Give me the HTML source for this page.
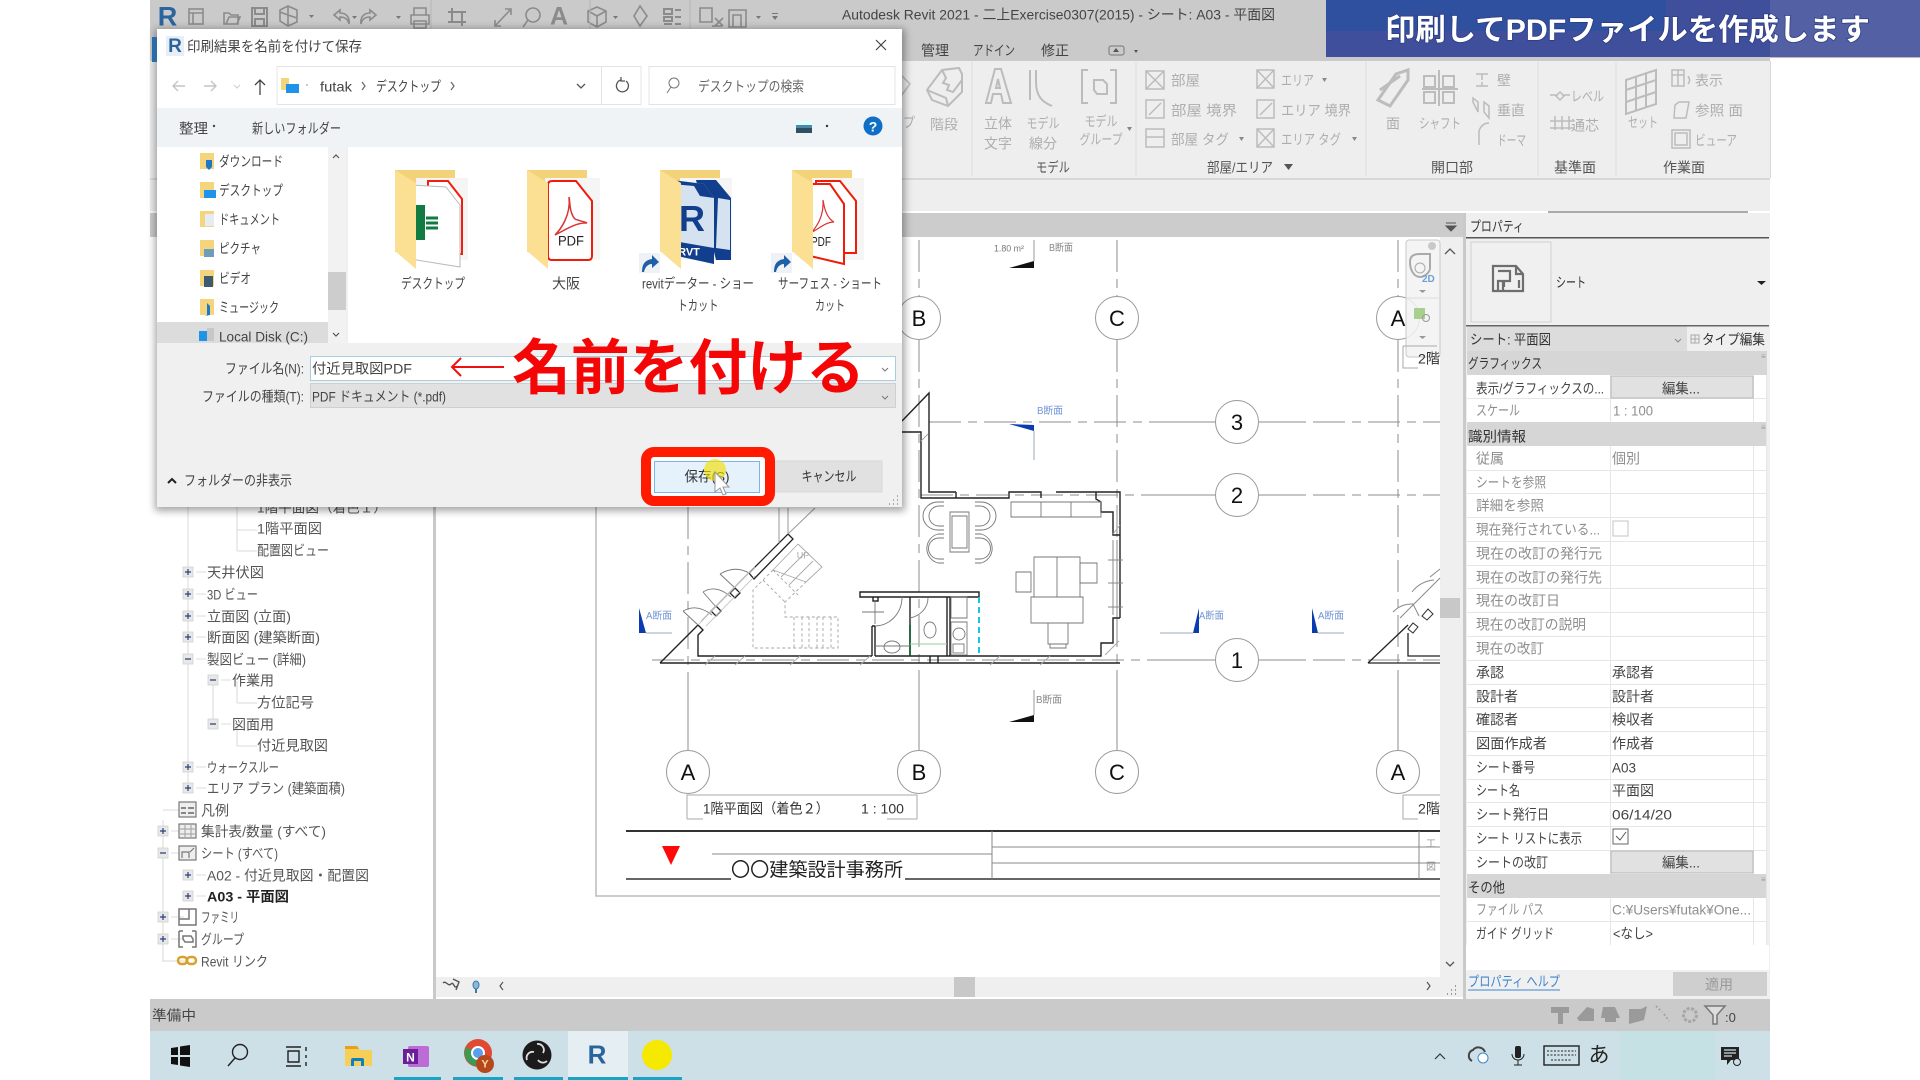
<!DOCTYPE html>
<html lang="ja"><head><meta charset="utf-8"><title>Revit</title>
<style>
html,body{margin:0;padding:0;background:#fff;width:1920px;height:1080px;overflow:hidden}
svg{display:block;filter:blur(.35px)}
text{font-family:"Liberation Sans","Noto Sans CJK JP",sans-serif;dominant-baseline:central;font-size:14px;transform:translateY(.7px)}
.m{text-anchor:middle}
</style></head><body>
<svg width="1920" height="1080" viewBox="0 0 1920 1080" xmlns="http://www.w3.org/2000/svg">
<defs><filter id="sh" x="-5%" y="-5%" width="110%" height="110%"><feGaussianBlur stdDeviation="4"/></filter></defs>
<rect width="1920" height="1080" fill="#fff"/>
<!-- app chrome -->
<rect x="150" y="0" width="1620" height="61" fill="#cacaca"/>
<rect x="150" y="61" width="1620" height="117" fill="#eeeeee"/>
<rect x="150" y="178" width="1620" height="2" fill="#d8d8d8"/>
<rect x="150" y="180" width="1620" height="31" fill="#eeeeee"/>
<rect x="150" y="211" width="1620" height="2" fill="#fff"/>
<rect x="1548" y="211" width="200" height="2" fill="#aaa"/>
<rect x="150" y="213" width="1313" height="24" fill="#cccccc"/>
<rect x="1463" y="213" width="307" height="787" fill="#efefef"/>
<rect x="150" y="237" width="283" height="762" fill="#fff"/>
<rect x="433" y="237" width="3" height="762" fill="#c9c9c9"/>
<rect x="436" y="237" width="1004" height="740" fill="#fff"/>
<rect x="1440" y="237" width="23" height="760" fill="#efefef"/>
<rect x="436" y="977" width="1027" height="20" fill="#efefef"/>
<rect x="954" y="977" width="21" height="20" fill="#c8c8c8"/>
<rect x="1440" y="598" width="20" height="20" fill="#c8c8c8"/>
<path d="M1445 254l5-5 5 5M1446 962l4 4 4-4" fill="none" stroke="#555" stroke-width="1.300"/>
<path d="M503 982l-3 4 3 4M1427 982l3 4-3 4" fill="none" stroke="#555" stroke-width="1.200"/>
<path d="M443 983c3-3 5 4 8 1s3 6 6 2M453 979l6 3-3 8" fill="none" stroke="#555" stroke-width="1.400"/>
<ellipse cx="476" cy="985" rx="3" ry="4" fill="#8ab8d8" stroke="#3a78a8"/><rect x="475" y="989" width="2" height="4" fill="#3a78a8"/>
<path d="M1447 994h1M1451 994h1M1455 994h1M1451 990h1M1455 990h1M1455 986h1" stroke="#999" stroke-width="2"/>

<!-- title bar -->
<text x="167.500" y="16" class="m" style="font-size:27px;font-weight:bold" fill="#2b659f">R</text>
<g fill="none" stroke="#8b8b8b" stroke-width="1.600">
<rect x="189" y="9" width="14" height="15"/><path d="M189 13h14M193 13v11"/>
<path d="M224 24v-11h5l2 2h7v9zM226 24l3-7h11l-3 7"/>
<path d="M252 8h15v18h-15zM255 8v6h9v-6M255 26v-7h9v7" stroke-width="2"/>
<path d="M288 6l9 4v12l-9 4-8-5v-11zM288 6v9l9 3M280 12l8 3v11"/>
<path d="M340 10l-6 5 6 5v-3c5 0 8 2 9 7 1-7-3-11-9-11z"/>
<path d="M370 10l6 5-6 5v-3c-5 0-8 2-9 7-1-7 3-11 9-11z"/>
<path d="M414 8h12v7h-12zM411 15h18v9h-18zM414 21h12v7h-12z"/>
<path d="M448 12h18M448 22h18M452 8v14M462 12v14" stroke-width="2"/>
<path d="M495 26l16-17M495 20v6h6M505 9h6v6"/>
<circle cx="533" cy="15" r="7"/><path d="M528 20l-5 7"/>
<path d="M597 7l9 4v11l-9 5-9-5v-11zM597 16l9-5M597 16l-9-5M597 16v11"/>
<path d="M640 6l7 10-7 10-6-10z"/>
<path d="M664 9h8v5h-8zM664 17h8v4h-8zM664 24h8M675 10h6M675 17h6M675 24h6" stroke-width="2"/>
<path d="M700 8h12v14h-12zM712 26h10M715 18l8 8M723 18l-8 8"/>
<path d="M729 10h17v17h-17zM733 15h8v12h-8z"/>
</g>
<text x="559" y="16" class="m" style="font-size:25px;font-weight:bold" fill="#8b8b8b">A</text>
<g fill="#777"><path d="M309 15h5l-2.500 3zM352 16h5l-2.500 3zM396 16h5l-2.500 3zM613 16h5l-2.500 3zM756 16h5l-2.500 3zM772 13h6v1h-6zM772 16h6l-3 4z"/></g>
<path d="M431 0v30M590 0v30M690 0v30" stroke="#b5b5b5"/>
<text x="842" y="14" textLength="433" lengthAdjust="spacingAndGlyphs" fill="#444">Autodesk Revit 2021 - 二上Exercise0307(2015) - シート: A03 - 平面図</text>
<g fill="#444">
<text x="921" y="50" textLength="28" lengthAdjust="spacingAndGlyphs">管理</text>
<text x="973" y="50" textLength="42" lengthAdjust="spacingAndGlyphs">アドイン</text>
<text x="1041" y="50" textLength="28" lengthAdjust="spacingAndGlyphs">修正</text>
</g>
<rect x="1109" y="46" width="15" height="9" rx="2" fill="none" stroke="#777"/><path d="M1116 48l3 4h-6zM1134 50h4l-2 3z" fill="#555"/>

<!-- banner -->
<rect x="1326" y="0" width="444" height="57" fill="#3f4f9c"/>
<rect x="1326" y="0" width="340" height="31" fill="#2f4f9f"/>
<rect x="1770" y="0" width="150" height="57" fill="#5360a4"/>
<rect x="1770" y="57" width="150" height="1" fill="#bbb"/>
<text x="1385" y="30" textLength="485" lengthAdjust="spacingAndGlyphs" style="font-size:30px;font-weight:700;paint-order:stroke;stroke:#2a3a80;stroke-width:1.500px" fill="#fff">印刷してPDFファイルを作成します</text>

<!-- ribbon -->
<path d="M972 62v114M1136 62v114M1366 62v114M1538 62v114M1616 62v114" stroke="#dcdcdc"/>
<rect x="1770" y="61" width="1" height="117" fill="#d8d8d8"/>
<g fill="#555" style="font-size:14px">
<text x="1053" y="167" class="m" textLength="34" lengthAdjust="spacingAndGlyphs">モデル</text>
<text x="1240" y="167" class="m" textLength="66" lengthAdjust="spacingAndGlyphs">部屋/エリア</text>
<path d="M1284 164h9l-4.500 6z"/>
<text x="1452" y="167" class="m" textLength="42" lengthAdjust="spacingAndGlyphs">開口部</text>
<text x="1575" y="167" class="m" textLength="42" lengthAdjust="spacingAndGlyphs">基準面</text>
<text x="1684" y="167" class="m" textLength="42" lengthAdjust="spacingAndGlyphs">作業面</text>
</g>
<g fill="#aeaeae" style="font-size:13.500px">
<text x="903" y="122" textLength="12" lengthAdjust="spacingAndGlyphs">プ</text>
<text x="944" y="124" class="m" textLength="28" lengthAdjust="spacingAndGlyphs">階段</text>
<text x="998" y="123" class="m" textLength="28" lengthAdjust="spacingAndGlyphs">立体</text>
<text x="998" y="143" class="m" textLength="28" lengthAdjust="spacingAndGlyphs">文字</text>
<text x="1043" y="123" class="m" textLength="33" lengthAdjust="spacingAndGlyphs">モデル</text>
<text x="1043" y="143" class="m" textLength="28" lengthAdjust="spacingAndGlyphs">線分</text>
<text x="1101" y="121" class="m" textLength="33" lengthAdjust="spacingAndGlyphs">モデル</text>
<text x="1101" y="139" class="m" textLength="43" lengthAdjust="spacingAndGlyphs">グループ</text>
<text x="1171" y="80" textLength="29" lengthAdjust="spacingAndGlyphs">部屋</text>
<text x="1171" y="110" textLength="66" lengthAdjust="spacingAndGlyphs">部屋 境界</text>
<text x="1171" y="139" textLength="58" lengthAdjust="spacingAndGlyphs">部屋 タグ</text>
<text x="1281" y="80" textLength="33" lengthAdjust="spacingAndGlyphs">エリア</text>
<text x="1281" y="110" textLength="70" lengthAdjust="spacingAndGlyphs">エリア 境界</text>
<text x="1281" y="139" textLength="60" lengthAdjust="spacingAndGlyphs">エリア タグ</text>
<text x="1393" y="123" class="m">面</text>
<text x="1440" y="123" class="m" textLength="42" lengthAdjust="spacingAndGlyphs">シャフト</text>
<text x="1497" y="80" >壁</text>
<text x="1497" y="110" textLength="28" lengthAdjust="spacingAndGlyphs">垂直</text>
<text x="1497" y="140" textLength="29" lengthAdjust="spacingAndGlyphs">ドーマ</text>
<text x="1571" y="96" textLength="33" lengthAdjust="spacingAndGlyphs">レベル</text>
<text x="1571" y="125" textLength="28" lengthAdjust="spacingAndGlyphs">通芯</text>
<text x="1643" y="122" class="m" textLength="30" lengthAdjust="spacingAndGlyphs">セット</text>
<text x="1695" y="80" textLength="28" lengthAdjust="spacingAndGlyphs">表示</text>
<text x="1695" y="110" textLength="48" lengthAdjust="spacingAndGlyphs">参照 面</text>
<text x="1695" y="140" textLength="42" lengthAdjust="spacingAndGlyphs">ビューア</text>
</g>
<g fill="none" stroke="#bcbcbc" stroke-width="1.500">
<path d="M927 90l15-20 17-2 3 6v18l-14 14-16-6zM927 90l19 8 2 8M942 70l4 8-3 5 6 2-2 5 6 2 9-12" stroke-width="2"/>
<path d="M901 75l9 9-9 12"/>
<path d="M986 103l9-34h6l10 34h-8l-2-9h-8l-2 9zM996 88h4l-2-9z" stroke-width="2"/>
<path d="M1030 70v30M1036 70v12c0 14 6 20 16 24" stroke-width="2"/>
<path d="M1088 70h-6v33h6M1110 70h6v33h-6M1094 80h9l4 4v10h-10l-3-4z" stroke-width="2"/>
<path d="M1146 71h18v18h-18zM1146 71l18 18M1164 71l-18 18M1146 100h18v18h-18zM1149 115l12-12M1146 129h18v18h-18zM1146 137h18"/>
<path d="M1257 70h17v18h-17zM1257 70l17 18M1274 70l-17 18M1257 100h17v18h-17zM1260 115l12-12M1257 129h17v18h-17zM1257 129l17 18M1274 129l-17 18"/>
<path d="M1378 100l18-26 12-4v10l-18 26zM1380 90l20-14" stroke-width="3"/>
<path d="M1424 76h11v11h-11zM1443 76h11v11h-11zM1424 92h11v11h-11zM1443 92h11v11h-11zM1439 70v36M1422 89h36" stroke-width="2"/>
<path d="M1476 74h12M1482 74v6M1476 86h12M1482 86v-4M1473 102l5 10v-10l-5-4zM1484 112l5 6v-12l-5-4zM1479 145v-14c2-6 6-8 10-8" />
<path d="M1550 95h8M1562 95h8M1560 92l-4 4 4 4 4-4zM1555 116v14M1562 116v14M1569 116v14M1550 121h24M1550 128h24"/>
<path d="M1626 80l30-10v34l-30 10zM1636 76v34M1646 73v34M1626 90l30-10M1626 102l30-10" stroke-width="2"/>
<path d="M1672 70h12v16h-12zM1672 75h12M1678 70v16M1688 76c2 3 2 6 0 8M1675 105l4-3h10l-3 16h-12zM1672 130h18v18h-18zM1675 133h12v12h-12z"/>
</g>
<path d="M1127 127h5l-2.500 4zM1239 137h5l-2.500 4zM1352 137h5l-2.500 4zM1322 78h5l-2.500 4z" fill="#888"/>
<path d="M1446 223h10M1446 226h10l-5 5z" fill="#555" stroke="#555"/>

<!-- canvas drawing -->
<g fill="none" stroke="#8c8c8c" stroke-width="1">
<path d="M596 507v389h844" stroke="#bbb" stroke-width="1.500"/>
<path d="M688 507v243M919 240v57M919 340v410M1117 240v57M1117 340v410M1398 240v56M1398 340v410" stroke-dasharray="32 7 9 7"/>
<path d="M688 680v70M919 680v70M1117 680v70M1398 680v70"/>
<path d="M929 422h287M1258 422h182M921 495h295M1258 495h182M652 660h564M1258 660h182" stroke-dasharray="32 7 9 7"/>
<path d="M1169 422h47M1258 422h45M1169 495h47M1258 495h45M1169 660h47M1258 660h45"/>
</g>
<g fill="#fff" stroke="#999">
<circle cx="919" cy="318" r="21.500"/><circle cx="1117" cy="318" r="21.500"/><circle cx="1398" cy="318" r="21.500"/>
<circle cx="1237" cy="422" r="21.500"/><circle cx="1237" cy="495" r="21.500"/><circle cx="1237" cy="660" r="21.500"/>
<circle cx="688" cy="772" r="21.500"/><circle cx="919" cy="772" r="21.500"/><circle cx="1117" cy="772" r="21.500"/><circle cx="1398" cy="772" r="21.500"/>
</g>
<g fill="#111" style="font-size:22px">
<text x="919" y="318" class="m" style="font-size:22px">B</text><text x="1117" y="318" class="m" style="font-size:22px">C</text><text x="1398" y="318" class="m" style="font-size:22px">A</text>
<text x="1237" y="422" class="m" style="font-size:22px">3</text><text x="1237" y="495" class="m" style="font-size:22px">2</text><text x="1237" y="660" class="m" style="font-size:22px">1</text>
<text x="688" y="772" class="m" style="font-size:22px">A</text><text x="919" y="772" class="m" style="font-size:22px">B</text><text x="1117" y="772" class="m" style="font-size:22px">C</text><text x="1398" y="772" class="m" style="font-size:22px">A</text>
</g>
<!-- view box / title block -->
<g fill="none" stroke="#aaa"><path d="M687 819v-24h230v24M703 819h-16M917 819h-30"/></g>
<text x="703" y="808" textLength="126" lengthAdjust="spacingAndGlyphs" fill="#333">1階平面図（着色２）</text>
<text x="861" y="808" textLength="43" lengthAdjust="spacingAndGlyphs" fill="#333">1 : 100</text>
<text x="1418" y="808" textLength="22" lengthAdjust="spacingAndGlyphs" fill="#333">2階</text>
<path d="M1403 795h37M1403 795v24h15" fill="none" stroke="#aaa"/>
<path d="M626 831h814" stroke="#333" stroke-width="2"/>
<path d="M626 879h105M905 879h535" stroke="#333" stroke-width="1.600"/>
<path d="M992 831v48M1419 831v48M992 847h448M992 863h448M712 854h280" stroke="#888"/>
<path d="M662 846h18l-9 19z" fill="#ff0a0a"/>
<text x="731" y="870" textLength="172" lengthAdjust="spacingAndGlyphs" style="font-size:19px" fill="#222">〇〇建築設計事務所</text>
<text x="1431" y="844" style="font-size:10px" fill="#999" class="m">工</text><text x="1431" y="867" style="font-size:10px" fill="#999" class="m">図</text>
<!-- section marks -->
<path d="M1009 268l25-7v7zM1009 722l25-7v7z" fill="#111"/>
<path d="M1034 240v21M1034 690v25" stroke="#999"/>
<path d="M1009 424l25 1v6zM639 608l7 25h-7zM1199 608v25h-6zM1312 608l6 25h-6z" fill="#0b3bb0"/>
<path d="M1034 431v29M646 633h26M1160 633h33M1318 633h26" stroke="#9ab" />
<g fill="#6f95d6">
<text x="1037" y="411" textLength="26" lengthAdjust="spacingAndGlyphs" style="font-size:10px">B断面</text>
<text x="646" y="616" textLength="26" lengthAdjust="spacingAndGlyphs" style="font-size:10px">A断面</text>
<text x="1199" y="616" textLength="25" lengthAdjust="spacingAndGlyphs" style="font-size:10px">A断面</text>
<text x="1318" y="616" textLength="26" lengthAdjust="spacingAndGlyphs" style="font-size:10px">A断面</text>
</g>
<text x="1049" y="248" textLength="24" lengthAdjust="spacingAndGlyphs" style="font-size:10px" fill="#888">B断面</text>
<text x="1036" y="700" textLength="26" lengthAdjust="spacingAndGlyphs" style="font-size:10px" fill="#888">B断面</text>
<text x="994" y="248" textLength="30" lengthAdjust="spacingAndGlyphs" style="font-size:9px" fill="#777">1.80 m²</text>
<!-- floor plan -->
<g fill="none" stroke="#222" stroke-width="1.400">
<path d="M660 663L698 625l5 5-5 5v21h174M875 656h226v-13h12v-25h7M1120 618V492h-64M1120 492H1096v7l5 3v10h12v23h7"/>
<path d="M660 663h460M902 421l27-28v29M929 422v70h27M902 432h19v66h35v-6M921 498h88v-6h32v6"/>
<path d="M788 534l5 5-39 40-5-6z" fill="#fff" stroke-width="1.300"/>
<path d="M860 592h119v5h-119z" fill="#fff"/>
<path d="M872 626v30M875 626v30M872 626h3M873 597v4h5v-4M910 597v59M947 597v59M950 597v59"/>
<path d="M930 656v7M938 656v7"/>
<path d="M735 588l5 5-5 5-5-5zM716 606l5 5-5 5-5-5z" fill="#fff" stroke-width="1.300"/>
</g>
<path d="M910 625v31" stroke="#0a5a2a" stroke-width="1.600"/>
<path d="M910 644h37" stroke="#9c9" />
<path d="M779 508v35M788 508v26M788 534l27-26" stroke="#999" fill="none"/>
<g fill="none" stroke="#777" stroke-width=".9">
<path d="M1011 502h90v15h-90zM1041 502v15M1071 502v15M950 512h19v40h-19zM952 516h15v32h-15z"/>
<path d="M944 502h-6a15 14 0 0 0 0 28h6M944 506h-5a10 10 0 0 0 0 20h5M944 534h-6a15 15 0 0 0 0 29h6M944 538h-5a10 10 0 0 0 0 21h5"/>
<path d="M975 502h6a15 14 0 0 1 0 28h-6M975 506h5a10 10 0 0 1 0 20h-5M975 534h6a15 15 0 0 1 0 29h-6M975 538h5a10 10 0 0 1 0 21h-5"/>
<path d="M1034 557h46v40h-46zM1057 557v40M1031 597h52v26h-52zM1048 623h20v21h-20zM1050 644h16v4h-16z"/>
<path d="M1016 572h15v20h-15zM1080 563h17v20h-17z"/>
<path d="M951 597h16v21h-16zM951 622h16v33h-16z"/><circle cx="959" cy="634" r="6"/><rect x="953" y="644" width="11" height="9"/>
<ellipse cx="892" cy="647" rx="8" ry="6"/><ellipse cx="930" cy="630" rx="6" ry="8"/>
<path d="M875 626c14 0 27-12 27-29M910 618c10-2 18-10 18-20M875 646h35M862 612h22M875 600v24" />
<path d="M683 611q14-8 29 4M683 611l15 14M703 592q13-8 28 5M703 592l13 15M720 574q15-9 29-1M720 574l15 14"/>
</g>
<path d="M700 618l49-50M705 623l49-50M697 622l57-58" stroke="#bbb" fill="none" stroke-width=".8" transform="translate(1 3)"/>
<g fill="none" stroke="#aaa" stroke-width=".9"><path d="M798 544l24 23-16 15M773 570l25-26M781 577l24-24M789 585l24-24M806 582l-33-12"/></g>
<text x="803" y="555" class="m" fill="#aaa" style="font-size:9px">UP</text>
<g fill="none" stroke="#a6a6a6" stroke-width=".9" stroke-dasharray="3 2.500"><path d="M773 570l-20 20v58h85v-31h-53v-15l21-20M763 580l22 22M773 570l25 25M794 617v31M802 617v31M809 617v31M817 617v31M823 617v31M831 617v31"/></g>
<path d="M979 597v59" stroke="#16c5de" stroke-width="2" stroke-dasharray="6 4"/>
<path d="M1113 540v75M1117 540v75M1108 583h15M1108 560h15M1108 607h15" stroke="#888" fill="none"/>
<g stroke="#aaa" fill="none"><path d="M705 665l10-9M735 665l10-9M790 665l10-9M860 665l10-9M990 665l10-9M1040 665l10-9M1105 655l14-14M921 441l7-7M1113 534l7-9"/></g>
<!-- right plan fragment -->
<g fill="none" stroke="#222" stroke-width="1.300"><path d="M1368 663l40-38M1408 633v23h32M1368 663h72"/></g>
<path d="M1408 629l5-6 5 4-5 6zM1422 616l6-7 5 5-6 6z" fill="#fff" stroke="#333"/>
<path d="M1393 612a26 26 0 0 1 20-8l6 12M1412 592a30 30 0 0 1 22-12M1430 577l10-8M1400 618l40-40" fill="none" stroke="#888"/>
<!-- nav widget -->
<rect x="1406" y="240" width="34" height="117" rx="3" fill="#f2f2f2" fill-opacity=".85" stroke="#c8c8c8"/>
<circle cx="1432" cy="246" r="4" fill="#c8c8c8"/>
<path d="M1410 262c0-7 5-8 10-8h10v14c0 4-5 9-10 9-6 0-10-7-10-15z" fill="none" stroke="#aaa" stroke-width="2"/><circle cx="1420" cy="268" r="5" fill="none" stroke="#aaa"/>
<text x="1422" y="279" fill="#6f9fd8" style="font-size:10px;font-weight:bold">2D</text>
<path d="M1419 290h7l-3.500 3zM1419 336h7l-3.500 3z" fill="#999"/><path d="M1406 298h34" stroke="#ddd"/>
<rect x="1414" y="308" width="11" height="11" fill="#a8cf90"/><circle cx="1426" cy="318" r="3.500" fill="none" stroke="#999"/>
<path d="M1403 346h34M1403 346v22h15" stroke="#aaa" fill="none"/>
<text x="1418" y="358" textLength="22" lengthAdjust="spacingAndGlyphs" fill="#333">2階</text>

<!-- tree -->
<g fill="none" stroke="#d9d9d9"><path d="M188 507v280M163 820v142M237 507v44M213 681v45M237 681v22M237 726v20M237 530h20M237 551h20M237 703h20M237 746h20M163 810h24M163 961h24"/></g>
<g fill="none" stroke="#dedede"><path d="M196 572h10M196 594h10M196 616h10M196 637h10M196 659h10M196 767h10M196 788h10M196 875h10M196 896h10M221 680h10M221 724h10M171 831h13M171 853h13M171 917h13M171 939h13"/></g>
<g fill="#e8e8e8" stroke="#d0d0d0" stroke-width=".8">
<rect x="183" y="567" width="10" height="10"/><rect x="183" y="589" width="10" height="10"/><rect x="183" y="611" width="10" height="10"/><rect x="183" y="632" width="10" height="10"/><rect x="183" y="654" width="10" height="10"/><rect x="183" y="762" width="10" height="10"/><rect x="183" y="783" width="10" height="10"/><rect x="183" y="870" width="10" height="10"/><rect x="183" y="891" width="10" height="10"/>
<rect x="208" y="675" width="10" height="10"/><rect x="208" y="719" width="10" height="10"/>
<rect x="158" y="826" width="10" height="10"/><rect x="158" y="848" width="10" height="10"/><rect x="158" y="912" width="10" height="10"/><rect x="158" y="934" width="10" height="10"/>
</g>
<path d="M185 572h6M188 569v6M185 594h6M188 591v6M185 616h6M188 613v6M185 637h6M188 634v6M185 659h6M185 767h6M188 764v6M185 788h6M188 785v6M185 875h6M188 872v6M185 896h6M188 893v6M210 680h6M210 724h6M160 831h6M163 828v6M160 853h6M160 917h6M163 914v6M160 939h6M163 936v6" stroke="#2c3f7a" stroke-width="1.200"/>
<g fill="#555" style="font-size:14px">
<text x="257" y="507" textLength="130" lengthAdjust="spacingAndGlyphs">1階平面図（着色１）</text>
<text x="257" y="528" textLength="65" lengthAdjust="spacingAndGlyphs">1階平面図</text>
<text x="257" y="550" textLength="72" lengthAdjust="spacingAndGlyphs">配置図ビュー</text>
<text x="207" y="572" textLength="57" lengthAdjust="spacingAndGlyphs">天井伏図</text>
<text x="207" y="594" textLength="51" lengthAdjust="spacingAndGlyphs">3D ビュー</text>
<text x="207" y="616" textLength="84" lengthAdjust="spacingAndGlyphs">立面図 (立面)</text>
<text x="207" y="637" textLength="113" lengthAdjust="spacingAndGlyphs">断面図 (建築断面)</text>
<text x="207" y="659" textLength="99" lengthAdjust="spacingAndGlyphs">製図ビュー (詳細)</text>
<text x="232" y="680" textLength="42" lengthAdjust="spacingAndGlyphs">作業用</text>
<text x="257" y="702" textLength="57" lengthAdjust="spacingAndGlyphs">方位記号</text>
<text x="232" y="724" textLength="42" lengthAdjust="spacingAndGlyphs">図面用</text>
<text x="257" y="745" textLength="71" lengthAdjust="spacingAndGlyphs">付近見取図</text>
<text x="207" y="767" textLength="72" lengthAdjust="spacingAndGlyphs">ウォークスルー</text>
<text x="207" y="788" textLength="138" lengthAdjust="spacingAndGlyphs">エリア プラン (建築面積)</text>
<text x="201" y="810" textLength="28" lengthAdjust="spacingAndGlyphs">凡例</text>
<text x="201" y="831" textLength="125" lengthAdjust="spacingAndGlyphs">集計表/数量 (すべて)</text>
<text x="201" y="853" textLength="77" lengthAdjust="spacingAndGlyphs">シート (すべて)</text>
<text x="207" y="875" textLength="162" lengthAdjust="spacingAndGlyphs">A02 - 付近見取図・配置図</text>
<text x="207" y="896" textLength="82" lengthAdjust="spacingAndGlyphs" style="font-weight:bold" fill="#222">A03 - 平面図</text>
<text x="201" y="917" textLength="38" lengthAdjust="spacingAndGlyphs">ファミリ</text>
<text x="201" y="939" textLength="43" lengthAdjust="spacingAndGlyphs">グループ</text>
<text x="201" y="961" textLength="67" lengthAdjust="spacingAndGlyphs">Revit リンク</text>
</g>
<g fill="none" stroke="#777" stroke-width="1.200">
<rect x="179" y="802" width="17" height="15" fill="#eee"/><path d="M181 808h5M188 808h6M181 813h5M188 813h6" stroke-width="2" stroke="#888"/>
<rect x="179" y="824" width="17" height="14" fill="#eee"/><path d="M179 829h17M179 834h17M185 824v14M191 824v14" stroke="#aaa"/>
<rect x="179" y="846" width="17" height="14" fill="#eee"/><path d="M182 858v-6h7v6M194 848l-4 4" />
<path d="M179 909h17v16h-17zM179 919h10v-10" stroke-width="1.500"/>
<path d="M179 931h-0v16h4M196 931h-4M196 931v16h-4M179 931h4M183 936h8l2 3v3h-8l-2-3z" stroke-width="1.500"/>
</g>
<rect x="178" y="957" width="9" height="7" rx="3.500" fill="none" stroke="#d9a02c" stroke-width="2.500"/><rect x="187" y="957" width="9" height="7" rx="3.500" fill="none" stroke="#d9a02c" stroke-width="2.500"/>

<!-- properties -->
<rect x="1463" y="213" width="3" height="787" fill="#c9c9c9"/>
<text x="1470" y="226" textLength="54" lengthAdjust="spacingAndGlyphs" fill="#333">プロパティ</text>
<rect x="1466" y="237" width="303" height="1.500" fill="#555"/>
<rect x="1471" y="242" width="80" height="80" fill="#f0f0f0" stroke="#d0d0d0"/>
<path d="M1493 266h23l7 8v17h-30zM1498 271h12v10h-6v6M1498 281v10h5v-10zM1516 266v8h7M1519 280v8" fill="#f0f0f0" stroke="#6e6e6e" stroke-width="2.200"/>
<text x="1556" y="282" textLength="30" lengthAdjust="spacingAndGlyphs" fill="#333">シート</text>
<path d="M1757 281h9l-4.500 4z" fill="#222"/>
<rect x="1466" y="325" width="303" height="1.500" fill="#666"/>
<rect x="1467" y="326.500" width="220" height="24.500" fill="#dcdcdc"/>
<text x="1470" y="339" textLength="81" lengthAdjust="spacingAndGlyphs" fill="#333">シート: 平面図</text>
<path d="M1675 339l3 3 3-3" fill="none" stroke="#888"/>
<rect x="1691" y="335" width="8" height="8" fill="none" stroke="#aaa"/><path d="M1695 335v8M1691 339h8" stroke="#aaa"/>
<text x="1702" y="339" textLength="63" lengthAdjust="spacingAndGlyphs" fill="#333">タイプ編集</text>
<rect x="1467" y="351" width="300" height="594" fill="#fff"/>
<g fill="#d6d6d6"><rect x="1467" y="351" width="300" height="24"/><rect x="1467" y="422" width="300" height="24"/><rect x="1467" y="874" width="300" height="24"/></g>
<g stroke="#e6e6e6"><path d="M1467 398.500h300M1467 470.500h300M1467 493.500h300M1467 517.500h300M1467 541.500h300M1467 565.500h300M1467 588.500h300M1467 612.500h300M1467 636.500h300M1467 660.500h300M1467 684.500h300M1467 707.500h300M1467 731.500h300M1467 755.500h300M1467 779.500h300M1467 802.500h300M1467 826.500h300M1467 850.500h300M1467 921.500h300M1467 945.500h300M1610.500 375v47M1610.500 446v428M1610.500 898v47M1753.500 375v47M1753.500 446v428M1753.500 898v47M1766.500 375v570"/></g>
<g fill="#e1e1e1" stroke="#b5b5b5"><rect x="1611" y="376" width="142" height="22"/><rect x="1611" y="851" width="142" height="22"/></g>
<g fill="#333">
<text x="1468" y="363" textLength="74" lengthAdjust="spacingAndGlyphs">グラフィックス</text>
<text x="1468" y="436" textLength="58" lengthAdjust="spacingAndGlyphs">識別情報</text>
<text x="1468" y="887" textLength="37" lengthAdjust="spacingAndGlyphs">その他</text>
</g>
<g fill="#999"><text x="1761" y="356" style="font-size:8px">≡</text><text x="1761" y="427" style="font-size:8px">≡</text><text x="1761" y="879" style="font-size:8px">≡</text></g>
<g fill="#444">
<text x="1476" y="388" textLength="128" lengthAdjust="spacingAndGlyphs">表示/グラフィックスの...</text>
<text x="1662" y="388" textLength="38" lengthAdjust="spacingAndGlyphs">編集...</text>
<text x="1476" y="672" textLength="28" lengthAdjust="spacingAndGlyphs">承認</text><text x="1612" y="672" textLength="42" lengthAdjust="spacingAndGlyphs">承認者</text>
<text x="1476" y="696" textLength="42" lengthAdjust="spacingAndGlyphs">設計者</text><text x="1612" y="696" textLength="42" lengthAdjust="spacingAndGlyphs">設計者</text>
<text x="1476" y="719" textLength="42" lengthAdjust="spacingAndGlyphs">確認者</text><text x="1612" y="719" textLength="42" lengthAdjust="spacingAndGlyphs">検収者</text>
<text x="1476" y="743" textLength="71" lengthAdjust="spacingAndGlyphs">図面作成者</text><text x="1612" y="743" textLength="42" lengthAdjust="spacingAndGlyphs">作成者</text>
<text x="1476" y="767" textLength="59" lengthAdjust="spacingAndGlyphs">シート番号</text><text x="1612" y="767" textLength="24" lengthAdjust="spacingAndGlyphs">A03</text>
<text x="1476" y="790" textLength="44" lengthAdjust="spacingAndGlyphs">シート名</text><text x="1612" y="790" textLength="42" lengthAdjust="spacingAndGlyphs">平面図</text>
<text x="1476" y="814" textLength="73" lengthAdjust="spacingAndGlyphs">シート発行日</text><text x="1612" y="814" textLength="60" lengthAdjust="spacingAndGlyphs">06/14/20</text>
<text x="1476" y="838" textLength="106" lengthAdjust="spacingAndGlyphs">シート リストに表示</text>
<text x="1476" y="862" textLength="72" lengthAdjust="spacingAndGlyphs">シートの改訂</text>
<text x="1662" y="862" textLength="38" lengthAdjust="spacingAndGlyphs">編集...</text>
<text x="1476" y="933" textLength="78" lengthAdjust="spacingAndGlyphs">ガイド グリッド</text><text x="1613" y="933" textLength="40" lengthAdjust="spacingAndGlyphs">&lt;なし&gt;</text>
</g>
<g fill="#8e8e8e">
<text x="1476" y="410" textLength="44" lengthAdjust="spacingAndGlyphs">スケール</text><text x="1613" y="410" textLength="40" lengthAdjust="spacingAndGlyphs">1 : 100</text>
<text x="1476" y="458" textLength="28" lengthAdjust="spacingAndGlyphs">従属</text><text x="1612" y="458" textLength="28" lengthAdjust="spacingAndGlyphs">個別</text>
<text x="1476" y="482" textLength="70" lengthAdjust="spacingAndGlyphs">シートを参照</text>
<text x="1476" y="505" textLength="68" lengthAdjust="spacingAndGlyphs">詳細を参照</text>
<text x="1476" y="529" textLength="124" lengthAdjust="spacingAndGlyphs">現在発行されている...</text>
<text x="1476" y="553" textLength="126" lengthAdjust="spacingAndGlyphs">現在の改訂の発行元</text>
<text x="1476" y="577" textLength="126" lengthAdjust="spacingAndGlyphs">現在の改訂の発行先</text>
<text x="1476" y="600" textLength="84" lengthAdjust="spacingAndGlyphs">現在の改訂日</text>
<text x="1476" y="624" textLength="110" lengthAdjust="spacingAndGlyphs">現在の改訂の説明</text>
<text x="1476" y="648" textLength="68" lengthAdjust="spacingAndGlyphs">現在の改訂</text>
<text x="1476" y="909" textLength="68" lengthAdjust="spacingAndGlyphs">ファイル パス</text><text x="1612" y="909" textLength="139" lengthAdjust="spacingAndGlyphs">C:¥Users¥futak¥One...</text>
</g>
<rect x="1613" y="521" width="15" height="15" fill="#fff" stroke="#c4c4c4"/>
<rect x="1613" y="829" width="15" height="15" fill="#fff" stroke="#666"/><path d="M1616 836l4 4 6-8" fill="none" stroke="#555"/>
<rect x="1466" y="945" width="303" height="25" fill="#fff"/>
<rect x="1466" y="970" width="303" height="30" fill="#f0f0f0"/>
<text x="1468" y="981" textLength="92" lengthAdjust="spacingAndGlyphs" fill="#3b86d1">プロパティ ヘルプ</text><path d="M1468 990h92" stroke="#3b86d1"/>
<rect x="1673" y="972" width="94" height="24" fill="#cfcfcf"/><text x="1719" y="984" class="m" textLength="28" lengthAdjust="spacingAndGlyphs" fill="#999">適用</text>

<!-- status -->
<rect x="150" y="999" width="1620" height="32" fill="#cacaca"/>
<text x="152" y="1015" textLength="44" lengthAdjust="spacingAndGlyphs" fill="#444">準備中</text>
<g fill="#9a9a9a">
<path d="M1551 1007h18v6h-6v11h-5v-11h-7zM1577 1018l10-11 7 2v12h-15zM1603 1007h12l5 11h-4v4h-11v-4h-4zM1629 1009h12l6-3-3 14-15 4z"/>
</g>
<g fill="none" stroke="#a6a6a6" stroke-width="2"><path d="M1656 1006l6 6M1664 1014l5 7" stroke-dasharray="2 2"/><circle cx="1690" cy="1015" r="6.500" stroke-dasharray="3 1.500" stroke-width="3"/></g>
<path d="M1705 1006h20l-8 9v9h-4v-9z" fill="#ddd" stroke="#777" stroke-width="1.500"/>
<text x="1725" y="1017" fill="#444" style="font-size:13px">:0</text>

<!-- taskbar -->
<rect x="150" y="1031" width="1620" height="49" fill="#cde0e7"/>
<rect x="1620" y="1031" width="95" height="49" fill="#c6e1e4"/>
<rect x="568" y="1031" width="60" height="49" fill="#e5eef3"/>
<g fill="#1aa3c5"><rect x="394" y="1077" width="47" height="3"/><rect x="453" y="1077" width="50" height="3"/><rect x="514" y="1077" width="49" height="3"/><rect x="568" y="1077" width="60" height="3"/><rect x="633" y="1077" width="49" height="3"/></g>
<path d="M171 1048l7-1v8h-7zM180 1046.500l10-1.500v10h-10zM171 1057h7v8l-7-1zM180 1057h10v10l-10-1.500z" fill="#111"/>
<g fill="none" stroke="#222" stroke-width="1.400"><circle cx="240" cy="1052" r="7.500"/><path d="M235 1058l-7 8"/>
<path d="M286 1047h15M286 1066h15M288 1051h11v11h-11zM306 1047v4M306 1055v3M306 1062v4"/></g>
<path d="M345 1046h12l3 4h12v16h-27z" fill="#f6cf58"/><path d="M345 1046h12l2 3h-14z" fill="#e3a21a"/><path d="M351 1066v-6q0-2 2-2h9q2 0 2 2v6h-3v-5h-7v5z" fill="#0e7fc7"/>
<rect x="408" y="1046" width="21" height="21" rx="2" fill="#bd6cd6"/><rect x="403" y="1049" width="15" height="15" fill="#6a1f99"/><text x="410.500" y="1057" class="m" fill="#fff" style="font-size:12px;font-weight:bold">N</text>
<circle cx="478" cy="1053" r="14" fill="#e04a32"/><path d="M478 1053l12 7a14 14 0 0 1-24-1 14 14 0 0 1 0-12z" fill="#3a9b54"/><circle cx="478" cy="1053" r="6" fill="#5b9df0" stroke="#fff" stroke-width="2"/>
<circle cx="485" cy="1064" r="9" fill="#b5481c"/><text x="485" y="1064" class="m" fill="#f5d9a0" style="font-size:11px;font-weight:bold">Y</text>
<circle cx="537" cy="1055" r="14.500" fill="#1b1b1b"/><g fill="none" stroke="#ddd" stroke-width="1.800"><path d="M537 1044a6 6 0 0 1 6 9M527 1060a6 6 0 0 1 7-8M547 1061a6 6 0 0 1-9-1"/></g>
<text x="597" y="1054" class="m" style="font-size:26px;font-weight:bold" fill="#2a639e">R</text>
<circle cx="657" cy="1055" r="15" fill="#f5e900"/>
<path d="M1435 1059l5-5 5 5" fill="none" stroke="#333" stroke-width="1.200"/>
<path d="M1472 1061a6 6 0 0 1 1-11 7 7 0 0 1 12 2" fill="none" stroke="#444" stroke-width="2"/><circle cx="1483" cy="1058" r="5" fill="#fff" stroke="#3b8ad0"/>
<rect x="1515" y="1046" width="6" height="12" rx="2" fill="#222"/><path d="M1512 1054a6 6 0 0 0 12 0M1518 1060v5M1514 1065h8" fill="none" stroke="#222"/>
<rect x="1544" y="1046" width="35" height="19" fill="none" stroke="#222" stroke-width="1.400"/><path d="M1547 1051h29M1547 1055h29M1551 1060h21" stroke="#222" stroke-dasharray="2 1.500"/>
<text x="1599" y="1055" class="m" fill="#222" style="font-size:21px">あ</text>
<path d="M1721 1047h18v13h-8l-4 5v-5h-6z" fill="#222"/><path d="M1724 1050h12M1724 1053h12M1724 1056h8" stroke="#cde0e7" stroke-width="1.300"/><circle cx="1737" cy="1062" r="3.500" fill="#cde0e7" stroke="#222"/>

<!-- dialog -->
<rect x="155" y="29" width="750" height="482" fill="#000" opacity=".35" filter="url(#sh)"/>
<rect x="152" y="37" width="5" height="25" fill="#2a6ca8"/>
<rect x="157" y="29" width="745" height="478" fill="#f0f0f0"/>
<rect x="157" y="29" width="745" height="79" fill="#fff"/>
<rect x="157" y="108" width="745" height="39" fill="#f0f3f6"/>
<rect x="157" y="147" width="171" height="196" fill="#fff"/>
<rect x="328" y="147" width="18" height="196" fill="#f2f2f2"/>
<rect x="328" y="272" width="18" height="38" fill="#cdcdcd"/>
<rect x="348" y="147" width="554" height="196" fill="#fff"/>
<rect x="157" y="322" width="171" height="21" fill="#dcdcdc"/>
<rect x="166" y="36" width="18" height="20" fill="#e7eef5"/>
<text x="175" y="46" class="m" style="font-size:19px;font-weight:bold" fill="#2a639e">R</text>
<text x="187" y="46" textLength="175" lengthAdjust="spacingAndGlyphs" fill="#444">印刷結果を名前を付けて保存</text>
<path d="M876 40l10 10M886 40l-10 10" stroke="#444" stroke-width="1.200"/>
<rect x="277" y="66.500" width="364" height="38" fill="#fff" stroke="#e4e4e4"/>
<path d="M601.500 67v37" stroke="#e4e4e4"/>
<rect x="649" y="66.500" width="246" height="38" fill="#fff" stroke="#e4e4e4"/>
<path d="M185 86h-12M178 81l-5 5 5 5M204 86h12M211 81l5 5-5 5" fill="none" stroke="#c4c4c4" stroke-width="1.400"/>
<path d="M234 85l3 3 3-3" fill="none" stroke="#ccc"/>
<path d="M260 95V80M255 85l5-5 5 5" fill="none" stroke="#444" stroke-width="1.300"/>
<path d="M281 78h8v6h10v6h-18z" fill="#f4d57d"/><rect x="286" y="84" width="13" height="9" fill="#1f93e8"/>
<circle cx="307" cy="85" r="1" fill="#bbb"/>
<g fill="#444">
<text x="320" y="86" textLength="32" lengthAdjust="spacingAndGlyphs">futak</text>
<text x="376" y="86" textLength="65" lengthAdjust="spacingAndGlyphs">デスクトップ</text>
</g>
<path d="M362 82l3 4-3 4M451 82l3 4-3 4" fill="none" stroke="#666" stroke-width="1.200"/>
<path d="M577 84l4 4 4-4" fill="none" stroke="#555" stroke-width="1.300"/>
<path d="M626 81a6 6 0 1 1-5-1M621 77v4h4" fill="none" stroke="#555" stroke-width="1.300"/>
<circle cx="674" cy="83" r="5" fill="none" stroke="#777"/><path d="M671 87l-4 6" stroke="#777"/>
<text x="698" y="86" textLength="106" lengthAdjust="spacingAndGlyphs" fill="#666">デスクトップの検索</text>
<text x="179" y="128" textLength="29" lengthAdjust="spacingAndGlyphs" fill="#444">整理</text><circle cx="214" cy="126" r="1.200" fill="#444"/>
<text x="252" y="128" textLength="89" lengthAdjust="spacingAndGlyphs" fill="#444">新しいフォルダー</text>
<rect x="796" y="121" width="16" height="12" fill="#4f87a8"/><rect x="796" y="121" width="16" height="4" fill="#dff"/><rect x="796" y="128" width="16" height="5" fill="#2f4f63"/>
<circle cx="827" cy="126" r="1.200" fill="#333"/>
<circle cx="873" cy="126" r="9.500" fill="#0f6fc6"/><text x="873" y="126" class="m" fill="#fff" style="font-size:14px;font-weight:bold">?</text>
<!-- nav pane -->
<g fill="#444">
<text x="219" y="161" textLength="64" lengthAdjust="spacingAndGlyphs">ダウンロード</text>
<text x="219" y="190" textLength="64" lengthAdjust="spacingAndGlyphs">デスクトップ</text>
<text x="219" y="219" textLength="61" lengthAdjust="spacingAndGlyphs">ドキュメント</text>
<text x="219" y="248" textLength="42" lengthAdjust="spacingAndGlyphs">ピクチャ</text>
<text x="219" y="278" textLength="32" lengthAdjust="spacingAndGlyphs">ビデオ</text>
<text x="219" y="307" textLength="60" lengthAdjust="spacingAndGlyphs">ミュージック</text>
<text x="219" y="336" textLength="89" lengthAdjust="spacingAndGlyphs">Local Disk (C:)</text>
</g>
<g fill="#f4d57d"><rect x="200" y="153" width="14" height="16"/><rect x="200" y="182" width="14" height="16"/><rect x="200" y="211" width="14" height="16"/><rect x="200" y="240" width="14" height="16"/><rect x="200" y="270" width="14" height="16"/><rect x="200" y="299" width="14" height="16"/></g>
<path d="M206 160v7l3 3 3-3v-7z" fill="#1e78c8"/><rect x="204" y="190" width="12" height="8" fill="#1f93e8"/><rect x="205" y="214" width="9" height="12" fill="#e6ecf2"/>
<rect x="204" y="249" width="10" height="8" fill="#6f9db8"/><rect x="204" y="276" width="9" height="11" fill="#3d5a70"/><path d="M207 303v12l-2 1 5-1v-9l3 3z" fill="#1e78c8"/>
<rect x="199" y="331" width="8" height="10" fill="#1f93e8"/><rect x="207" y="328" width="7" height="13" fill="#c7c7c7"/>
<path d="M333 158l3-3 3 3M333 333l3 3 3-3" fill="none" stroke="#555" stroke-width="1.200"/>
<!-- folders -->
<g>
<path d="M395 170h60v82h-60z" fill="#f3d27a"/>
<path d="M416 178h52v82h-52z" fill="#f5f5f5"/>
<path d="M428 181h20l14 18v55h-34z" fill="#fff" stroke="#f01f10" stroke-width="2"/>
<path d="M410 185l36 2 14 18 0 62-50-8z" fill="#fff" stroke="#b9b9b9"/>
<rect x="416" y="205" width="9" height="35" fill="#107c41"/><path d="M426 218h12M426 223h12M426 228h12" stroke="#107c41" stroke-width="3"/>
<path d="M395 170l21 13v86l-21-18z" fill="#fbdf92"/>
</g>
<g>
<path d="M527 170h60v82h-60z" fill="#f3d27a"/>
<path d="M545 178h55v82h-55z" fill="#f5f5f5"/>
<path d="M552 181h24l16 20v55q0 4-4 4h-36q-4 0-4-4v-71q0-4 4-4z" fill="#fff" stroke="#ee1c0a" stroke-width="2"/>
<path d="M569 197c2 18-8 32-14 38 8-4 20-12 30-12 6 0-6-2-10-4-6-6-5-20-6-22" fill="none" stroke="#d33" stroke-width="1.500"/>
<text x="571" y="240" class="m" textLength="26" lengthAdjust="spacingAndGlyphs" fill="#222" style="font-size:14px">PDF</text>
<path d="M527 170l21 13v86l-21-18z" fill="#fbdf92"/>
</g>
<g>
<path d="M660 170h60v82h-60z" fill="#f3d27a"/>
<path d="M680 178h52v82h-52z" fill="#f5f5f5"/>
<path d="M696 180h20l15 18v62h-15z" fill="#123f8d"/>
<path d="M718 198l12 2v50l-14-2z" fill="#d5e2ef"/>
<path d="M672 180l32 4 10 14v66l-46-10z" fill="#d5e2ef"/>
<path d="M672 180l32 4 10 14-14-2-6-10-22-2z" fill="#123f8d"/>
<path d="M668 240l46 8v16l-46-10z" fill="#123f8d"/>
<text x="692" y="218" class="m" style="font-size:36px;font-weight:bold" fill="#123f8d">R</text>
<text x="689" y="252" class="m" style="font-size:11px;font-weight:bold" fill="#fff">RVT</text>
<path d="M660 170l21 13v86l-21-18z" fill="#fbdf92"/>
<rect x="639" y="253" width="21" height="20" fill="#eef1f5"/><path d="M642 272c0-8 3-12 10-13v-4l7 7-7 6v-4c-4 0-7 3-8 8z" fill="#1f5fa8"/>
</g>
<g>
<path d="M792 170h60v82h-60z" fill="#f3d27a"/>
<path d="M812 178h52v82h-52z" fill="#f5f5f5"/>
<path d="M816 181h24l16 20v52h-38z" fill="#fff" stroke="#ee1c0a" stroke-width="2"/>
<path d="M808 184h22l14 20 0 60-34-8z" fill="#fff" stroke="#ee1c0a" stroke-width="2"/>
<path d="M823 200c1 16-6 26-11 32 8-4 14-10 22-10-8-4-10-16-11-22" fill="none" stroke="#d33" stroke-width="1.200"/>
<text x="821" y="241" class="m" textLength="20" lengthAdjust="spacingAndGlyphs" fill="#222" style="font-size:13px">PDF</text>
<path d="M792 170l21 13v86l-21-18z" fill="#fbdf92"/>
<rect x="771" y="253" width="21" height="20" fill="#eef1f5"/><path d="M774 272c0-8 3-12 10-13v-4l7 7-7 6v-4c-4 0-7 3-8 8z" fill="#1f5fa8"/>
</g>
<g fill="#444">
<text x="433" y="283" class="m" textLength="64" lengthAdjust="spacingAndGlyphs">デスクトップ</text>
<text x="566" y="283" class="m" textLength="28" lengthAdjust="spacingAndGlyphs">大阪</text>
<text x="698" y="283" class="m" textLength="112" lengthAdjust="spacingAndGlyphs">revitデーター - ショー</text>
<text x="698" y="305" class="m" textLength="41" lengthAdjust="spacingAndGlyphs">トカット</text>
<text x="830" y="283" class="m" textLength="104" lengthAdjust="spacingAndGlyphs">サーフェス - ショート</text>
<text x="830" y="305" class="m" textLength="30" lengthAdjust="spacingAndGlyphs">カット</text>
</g>
<!-- footer -->
<text x="225" y="368" textLength="79" lengthAdjust="spacingAndGlyphs" fill="#444">ファイル名(N):</text>
<text x="202" y="396" textLength="102" lengthAdjust="spacingAndGlyphs" fill="#444">ファイルの種類(T):</text>
<rect x="310.500" y="356.500" width="585" height="24" fill="#fff" stroke="#a6cee3"/>
<text x="312" y="368" textLength="100" lengthAdjust="spacingAndGlyphs" fill="#444">付近見取図PDF</text>
<rect x="310.500" y="383.500" width="585" height="24" fill="#e1e1e1" stroke="#cfcfcf"/>
<text x="312" y="396" textLength="134" lengthAdjust="spacingAndGlyphs" fill="#444">PDF ドキュメント (*.pdf)</text>
<path d="M882 368l3 3 3-3M882 396l3 3 3-3" fill="none" stroke="#777"/>
<path d="M452 367h52M461 358l-9 9 9 9" fill="none" stroke="#f01010" stroke-width="2"/>
<text x="512" y="368" textLength="353" lengthAdjust="spacingAndGlyphs" style="font-size:60px;font-weight:bold" fill="#f40606">名前を付ける</text>
<path d="M168 483l4-4 4 4" fill="none" stroke="#222" stroke-width="2"/>
<text x="184" y="480" textLength="108" lengthAdjust="spacingAndGlyphs" fill="#444">フォルダーの非表示</text>
<rect x="775" y="461" width="107" height="31" fill="#e1e1e1" stroke="#d8d8d8"/>
<text x="829" y="476" class="m" textLength="55" lengthAdjust="spacingAndGlyphs" fill="#333">キャンセル</text>
<rect x="646" y="452" width="124" height="49" rx="8" fill="#fff" stroke="#ff1a00" stroke-width="10"/>
<rect x="654.500" y="461.500" width="105" height="31" fill="#e5f1fb" stroke="#7eb4ea"/>
<text x="707" y="476" class="m" textLength="45" lengthAdjust="spacingAndGlyphs" fill="#333">保存(S)</text>
<circle cx="715" cy="470" r="11" fill="#f3e000" opacity=".65"/>
<path d="M715 472v20l5-4 3 7 3-1-3-7h6z" fill="#fff" stroke="#999"/>
<path d="M897 496h1M893 500h1M897 500h1M889 504h1M893 504h1M897 504h1" stroke="#aaa" stroke-width="2"/>
</svg>
</body></html>
